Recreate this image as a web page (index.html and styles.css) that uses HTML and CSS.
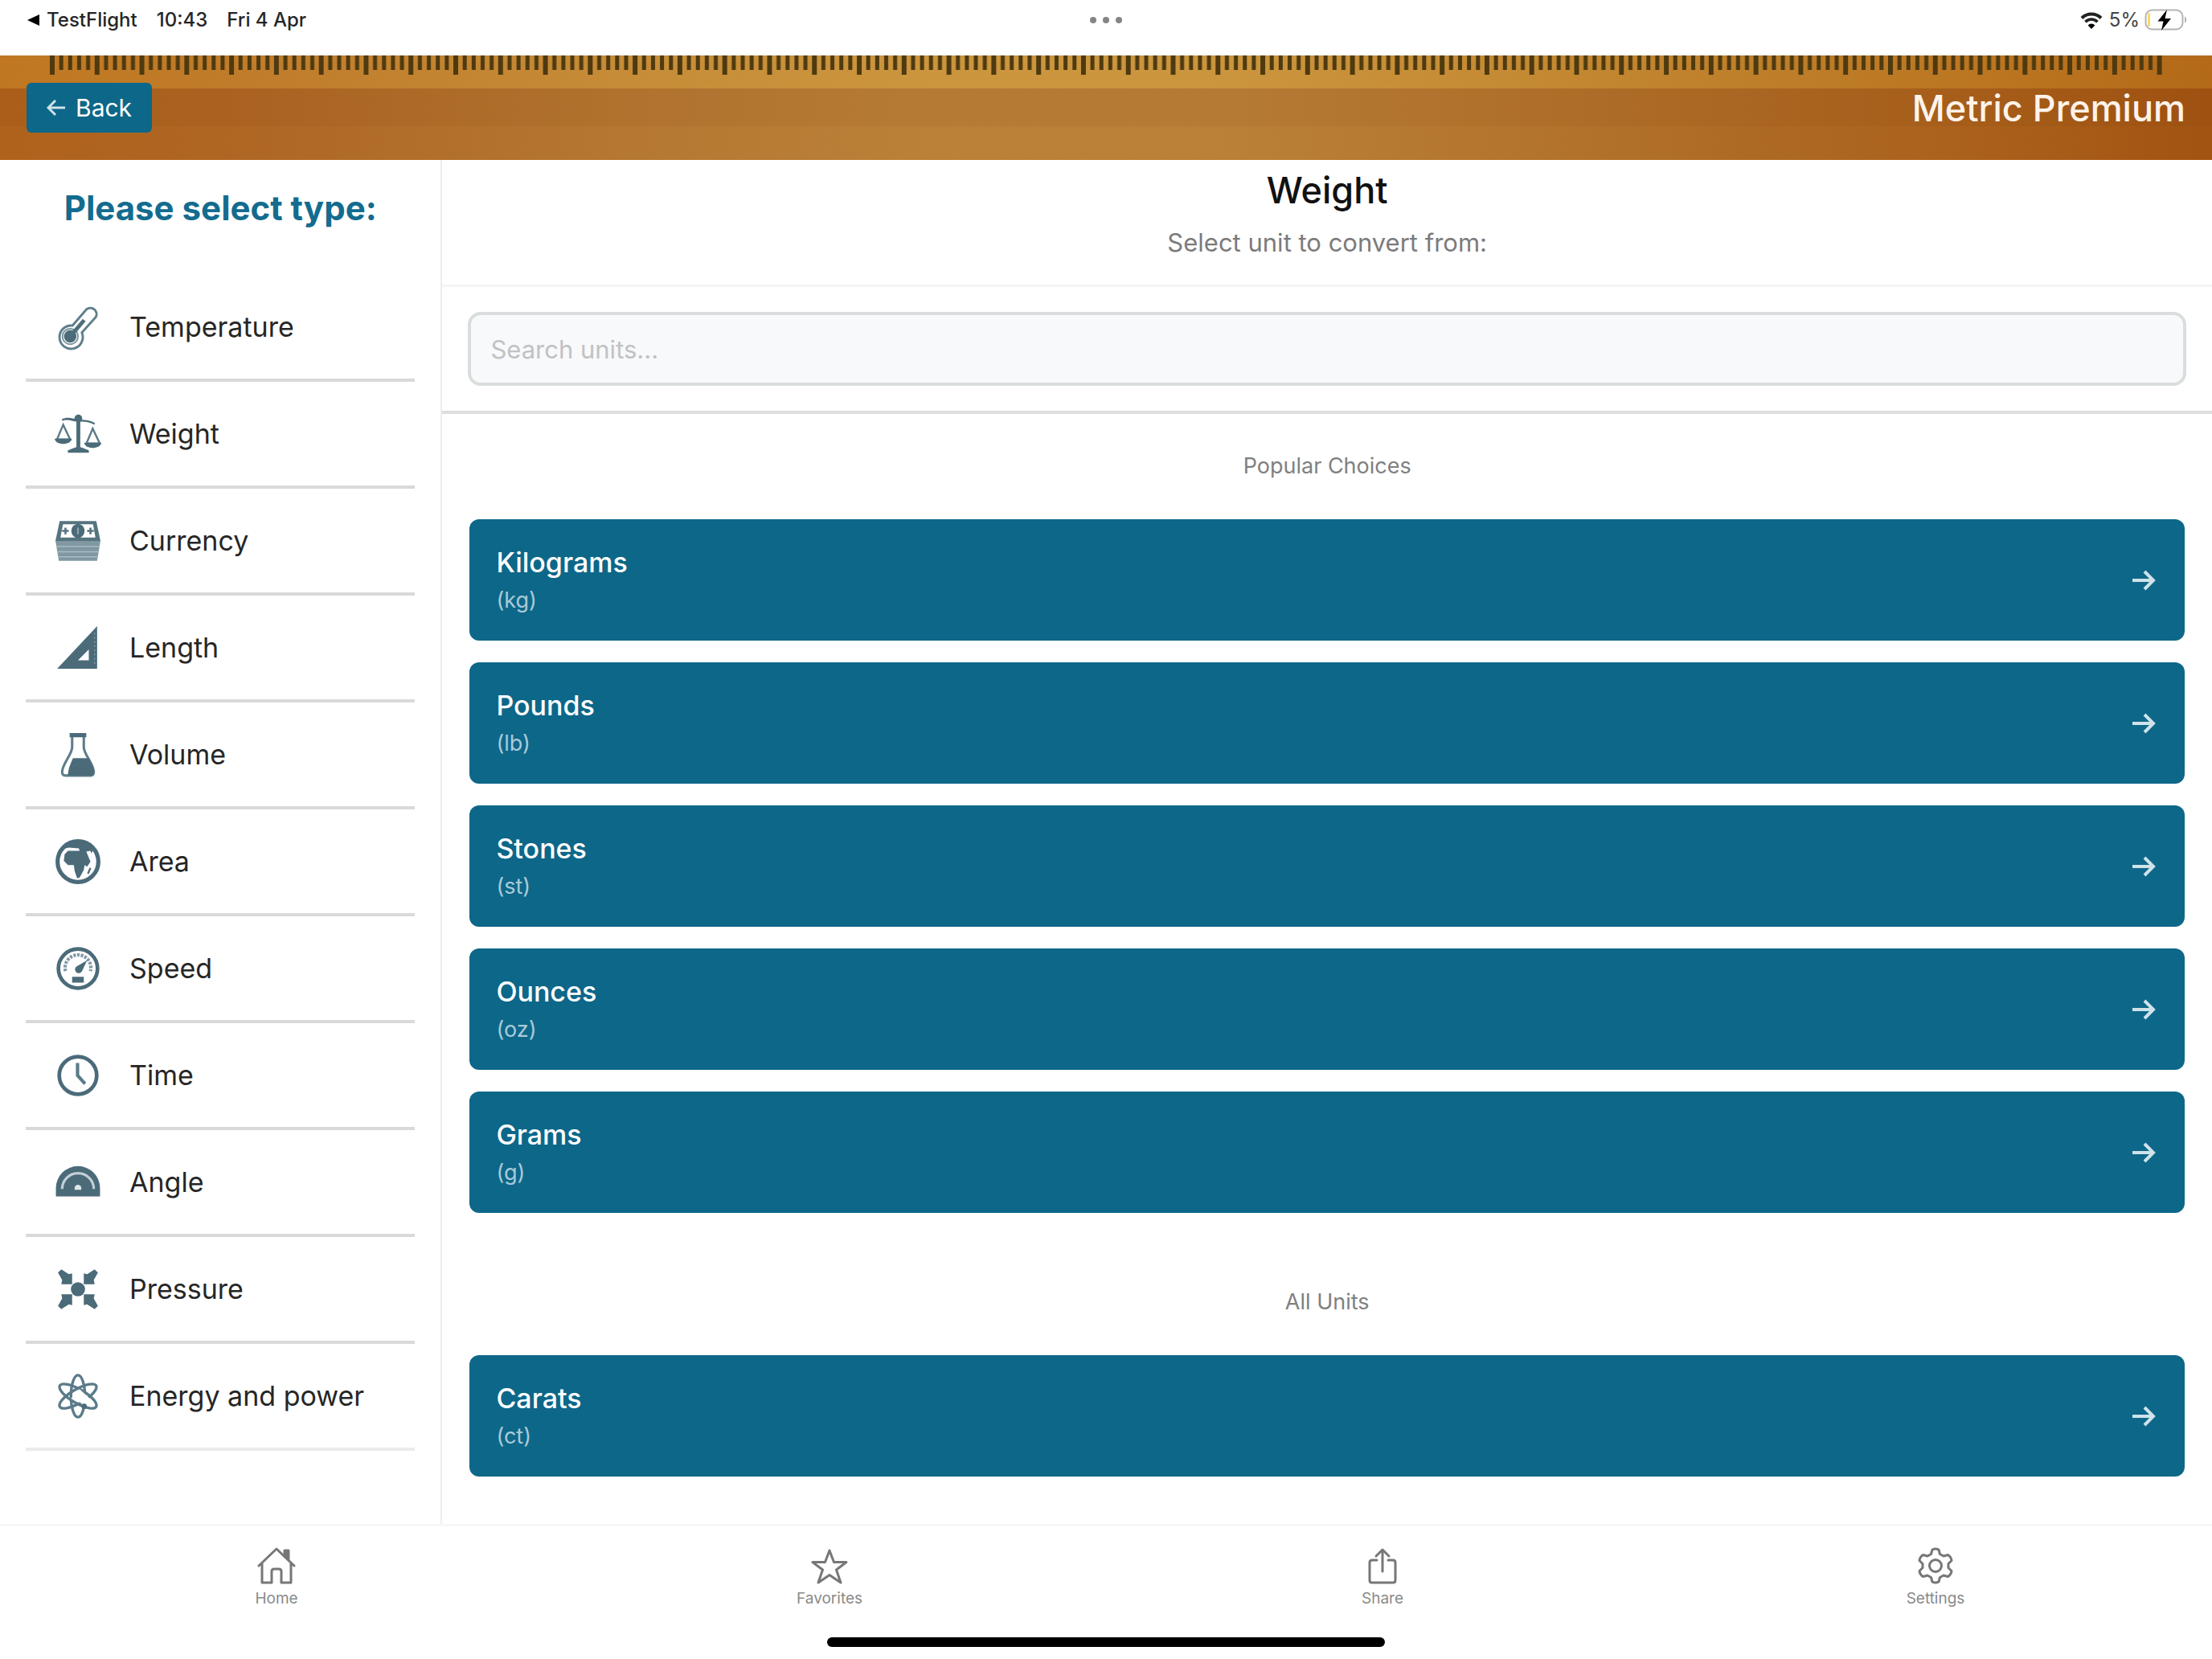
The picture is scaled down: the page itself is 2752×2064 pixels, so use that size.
FILE: index.html
```html
<!DOCTYPE html>
<html lang="en">
<head>
<meta charset="utf-8">
<title>Metric Premium</title>
<link rel="stylesheet" href="styles.css">
</head>
<body>
<div class="app">
  <div class="status">
    <div class="status-side status-left">
      <svg class="status-caret" viewBox="0 0 16 16" aria-hidden="true"><path d="M0 8 15 1v14z"/></svg>
      <span class="status-app">TestFlight</span>
      <span class="status-item">10:43</span>
      <span class="status-item">Fri 4 Apr</span>
    </div>
    <div class="status-dots"><i></i><i></i><i></i></div>
    <div class="status-side status-right">
      <svg class="wifi" viewBox="0 0 28 22" aria-hidden="true"><path d="M2 8.500a17 17 0 0 1 24 0" fill="none" stroke="#222" stroke-width="4"/><path d="M6.500 13.200a10.500 10.500 0 0 1 15 0" fill="none" stroke="#222" stroke-width="3.600"/><path d="M14 22l-4.400-4.600a6.200 6.200 0 0 1 8.800 0z"/></svg>
      <span class="battery-text">5%</span>
      <svg class="battery" viewBox="0 0 54 28" aria-hidden="true"><rect x="1.500" y="1.500" width="46" height="24" rx="8" fill="#fff" stroke="#b4b4b4" stroke-width="2"/><path d="M5.500 5.500v16" stroke="#f7d96a" stroke-width="3"/><path d="M50 9.500c3 .6 3 7.400 0 8z" fill="#b4b4b4"/><path d="M28 1 16.500 15.500h7L21 27l12-15h-7.500z" fill="#000"/></svg>
    </div>
  </div>

  <header class="header">
    <svg class="ruler" viewBox="0 0 2752 24" preserveAspectRatio="none" aria-hidden="true">
      <defs><pattern id="ticks" x="62" y="0" width="55.780" height="24" patternUnits="userSpaceOnUse"><path d="M0 0h6v24h-6zM11.656 0h5v18h-5zM22.812 0h5v18h-5zM33.968 0h5v18h-5zM45.124 0h5v18h-5z" fill="#4f3a10"/></pattern></defs>
      <rect x="62" width="2628" height="24" fill="url(#ticks)"/>
    </svg>
    <button class="back" type="button"><svg viewBox="0 0 24 24" aria-hidden="true"><path d="M23 12H3M11 3l-9 9 9 9"/></svg>Back</button>
    <h1 class="brand">Metric Premium</h1>
  </header>

  <div class="body">
    <nav class="sidebar" aria-label="Types">
      <h2 class="sidebar-title">Please select type:</h2>
      <a class="type" href="#"><svg viewBox="0 0 56 60"><path d="M21 28 39 7a8 8 0 0 1 12 10L33 37a15 15 0 1 1-12-9z" fill="none" stroke="#5f7e8b" stroke-width="3"/><circle cx="18" cy="42" r="10" fill="none" stroke="#7f98a2" stroke-width="2"/><circle cx="18" cy="42" r="8"/><path d="M18 42 36 21" stroke="#4d6d7b" stroke-width="5"/></svg>Temperature</a>
      <a class="type" href="#"><svg viewBox="0 0 60 52"><path d="M28 4h5v40h-5zM17 50v-3l10-4h7l10 4v3zM9 7c8-4 13-1 21 0s15 0 22 5l-1 2c-7-4-13-4-21-4S17 6 10 9z"/><circle cx="30.500" cy="6" r="5"/><path d="M11 14 3 33h17zM49 19l-8 19h17z" fill="none" stroke="#5b7b89" stroke-width="2.500"/><path d="M0 32h22c-1 9-21 9-22 0zM38 37h22c-1 9-21 9-22 0z"/></svg>Weight</a>
      <a class="type" href="#"><svg viewBox="0 0 56 52"><path d="M6 2h44l5 24H1z" fill="#55747f"/><path d="M10 6h36l3 16H7z" fill="#fff"/><ellipse cx="28" cy="14" rx="8" ry="8.500"/><path d="M28 10v8" stroke="#8fa5ad" stroke-width="2"/><path d="M13 10v8M9 14h8M43 10v8M39 14h8" stroke="#55747f" stroke-width="2.500"/><path d="M1 26h54l-4 24H5z" fill="#7f98a2"/><path d="M2 32.500h52M3 39h50M4 45h48" stroke="#a9bbc2" stroke-width="1.500"/></svg>Currency</a>
      <a class="type" href="#"><svg viewBox="0 0 56 56"><path fill-rule="evenodd" d="M51 2v51H3zM41 30 28 43h13z"/><path d="M48 10v40" stroke="#7f98a2" stroke-width="1.500" stroke-dasharray="2 3"/></svg>Length</a>
      <a class="type" href="#"><svg viewBox="0 0 56 56"><path d="M20 4h16M21 5v14c0 8-11 19-12 29-.3 3 1 5 4 5h30c3 0 4.300-2 4-5-1-10-12-21-12-29V5" fill="none" stroke="#5f7e8b" stroke-width="3"/><path d="M18 7V2h20v5zM22 32h19c3 6 5 10 6 15 .5 4-1 6-4 6H16c0-8 3-14 6-21z"/></svg>Volume</a>
      <a class="type" href="#"><svg viewBox="0 0 56 56"><circle cx="28" cy="28" r="24.500" fill="none" stroke="#4b6b79" stroke-width="5"/><path d="M9 13C17 1 39 1 47 13l-3 5-1-3-5 1 5 12-4 6-3-2-1 6-5 9-3 1-3-9-1-7h-7l-5-5 1-8 4-4h14l-1-3-12-1z"/><path d="M42 35l2 1-3 7-2-1z"/></svg>Area</a>
      <a class="type" href="#"><svg viewBox="0 0 56 56"><circle cx="28" cy="28" r="23.500" fill="none" stroke="#4b6b79" stroke-width="4.500"/><path d="M13 31a15.500 15.500 0 1 1 30 0" fill="none" stroke="#7f98a2" stroke-width="4" stroke-dasharray="3 1.500"/><path d="M39 18 33 31a4.500 4.500 0 1 1-6-6zM21 38h14v7H21z"/></svg>Speed</a>
      <a class="type" href="#"><svg viewBox="0 0 56 56"><circle cx="28" cy="28" r="22.500" fill="none" stroke="#4b6b79" stroke-width="4.500"/><path d="M27.500 13v15l9 10" fill="none" stroke="#5b7b89" stroke-width="4"/></svg>Time</a>
      <a class="type" href="#"><svg viewBox="0 0 56 56"><path d="M1.500 45V35a26.500 26.500 0 0 1 53 0v10z"/><path d="M9 36a19 19 0 0 1 38 0" fill="none" stroke="#c3d0d5" stroke-width="3"/><path d="M24 37v-2a4 4 0 0 1 8 0v2z" fill="#dfe7ea"/></svg>Angle</a>
      <a class="type" href="#"><svg viewBox="0 0 56 56"><circle cx="28" cy="28" r="8.500"/><path d="M4 8l4-4 9 6 4-1v13H8l1-5zM52 8l-4-4-9 6-4-1v13h13l-1-5zM4 48l4 4 9-6 4 1V34H8l1 5zM52 48l-4 4-9-6-4 1V34h13l-1 5z"/></svg>Pressure</a>
      <a class="type" href="#"><svg viewBox="0 0 56 60"><g fill="none" stroke="#5b7b89" stroke-width="3.500"><ellipse cx="28" cy="30" rx="9" ry="27"/><ellipse cx="28" cy="30" rx="9" ry="27" transform="rotate(60 28 30)"/><ellipse cx="28" cy="30" rx="9" ry="27" transform="rotate(-60 28 30)"/></g><path d="M30 21 44 34l-3 7-6-1-16-7z" fill="#fff"/><circle cx="36" cy="43" r="3.500"/></svg>Energy and power</a>
    </nav>

    <main class="main">
      <div class="intro">
        <h2 class="intro-title">Weight</h2>
        <p class="intro-text">Select unit to convert from:</p>
      </div>
      <div class="search"><input class="search-input" type="text" placeholder="Search units..." aria-label="Search units"></div>
      <section class="group">
        <h3 class="group-title">Popular Choices</h3>
        <button class="unit" type="button"><span class="unit-text"><span class="unit-name">Kilograms</span><span class="unit-sym">(kg)</span></span><svg viewBox="0 0 30 26"><path d="M1 13h25M16 2l11 11-11 11"/></svg></button>
        <button class="unit" type="button"><span class="unit-text"><span class="unit-name">Pounds</span><span class="unit-sym">(lb)</span></span><svg viewBox="0 0 30 26"><path d="M1 13h25M16 2l11 11-11 11"/></svg></button>
        <button class="unit" type="button"><span class="unit-text"><span class="unit-name">Stones</span><span class="unit-sym">(st)</span></span><svg viewBox="0 0 30 26"><path d="M1 13h25M16 2l11 11-11 11"/></svg></button>
        <button class="unit" type="button"><span class="unit-text"><span class="unit-name">Ounces</span><span class="unit-sym">(oz)</span></span><svg viewBox="0 0 30 26"><path d="M1 13h25M16 2l11 11-11 11"/></svg></button>
        <button class="unit" type="button"><span class="unit-text"><span class="unit-name">Grams</span><span class="unit-sym">(g)</span></span><svg viewBox="0 0 30 26"><path d="M1 13h25M16 2l11 11-11 11"/></svg></button>
      </section>
      <section class="group">
        <h3 class="group-title">All Units</h3>
        <button class="unit" type="button"><span class="unit-text"><span class="unit-name">Carats</span><span class="unit-sym">(ct)</span></span><svg viewBox="0 0 30 26"><path d="M1 13h25M16 2l11 11-11 11"/></svg></button>
      </section>
    </main>
  </div>

  <footer class="footer">
    <nav class="tabs" aria-label="Tabs">
      <a class="tab" href="#"><svg viewBox="0 0 48 48"><path d="M2 24 24 3l22 21M6 21v24h12V31q0-3 3-3h6q3 0 3 3v14h12V21"/><path d="M34 12V5h5v12z" fill="#777"/></svg>Home</a>
      <a class="tab" href="#"><svg viewBox="0 0 48 48"><path d="M24 5l5.500 14.500H45L32.500 29 38 45 24 35.500 10 45l5.500-16L3 19.500h15.500z"/></svg>Favorites</a>
      <a class="tab" href="#"><svg viewBox="0 0 48 48"><path d="M17 17h-6q-3 0-3 3v22q0 3 3 3h26q3 0 3-3V20q0-3-3-3h-6M24 31V4M16 12l8-8 8 8"/></svg>Share</a>
      <a class="tab" href="#"><svg viewBox="0 0 48 48"><path d="M20 4q4-2 8 0l1.500 5.500 4.500 2.500 5.500-1.500q4 2.500 4.500 7l-4 4v5l4 4q-.5 4.500-4.500 7L34 36l-4.500 2.500L28 44q-4 2-8 0l-1.500-5.500L14 36l-5.500 1.500q-4-2.500-4.500-7l4-4v-5l-4-4q.5-4.500 4.500-7L14 12l4.500-2.500z"/><circle cx="24" cy="24" r="7.500"/></svg>Settings</a>
    </nav>
    <div class="indicator"></div>
  </footer>
</div>
</body>
</html>
```

FILE: styles.css
```css
* { box-sizing: border-box; }

body {
  margin: 0;
  background: #fff;
  color: #262626;
  font-family: Inter, "Liberation Sans", sans-serif;
}

h1, h2, h3, p { margin: 0; font-weight: 500; }
a { color: inherit; text-decoration: none; }
button { border: 0; font: inherit; color: #fff; background: #0d6789; cursor: pointer; }

.app { display: flex; flex-direction: column; min-height: 100vh; }

/* Status bar */
.status {
  display: grid;
  grid-template-columns: 1fr auto 1fr;
  align-items: center;
  height: 69px;
  padding: 0 30px 20px;
  font-size: 24px;
  font-weight: 500;
}
.status-side { display: flex; align-items: center; }
.status-left { padding-left: 4px; }
.status-right { justify-content: flex-end; }
.status-caret { width: 16px; height: 16px; margin-right: 8px; }
.status-item { margin-left: 24px; }
.status-dots { display: flex; gap: 8px; }
.status-dots i { width: 8px; height: 8px; border-radius: 50%; background: #858585; }
.wifi { width: 28px; height: 22px; margin-right: 8px; }
.battery-text { margin-right: 6px; color: #444; font-weight: 400; }
.battery { width: 54px; height: 28px; }

/* Wooden header */
.header {
  position: relative;
  display: flex;
  align-items: center;
  justify-content: space-between;
  height: 130px;
  padding: 0 33px;
  background:
    linear-gradient(rgba(240, 200, 50, .14) 41px, rgba(110, 40, 0, .18) 41px, rgba(110, 40, 0, .18) 88px, rgba(110, 40, 0, .12) 88px),
    linear-gradient(90deg, #b86a1e 0%, #b8702a 12%, #bf8238 28%, #c58d40 42%, #c58d40 55%, #be8034 68%, #b67228 80%, #b2681e 90%, #a95a14 100%);
}
.ruler { position: absolute; top: 0; left: 0; width: 100%; height: 24px; }
.back {
  display: flex;
  align-items: center;
  gap: 12px;
  height: 62px;
  padding: 0 25px;
  border-radius: 6px;
  font-size: 30px;
}
.back svg { width: 24px; height: 24px; fill: none; stroke: #cfe2ea; stroke-width: 3; }
.brand { color: #fdf3ea; font-size: 45px; }

/* Body columns */
.body { display: flex; flex: 1; }
.sidebar {
  flex: none;
  width: 20%;
  padding: 0 32px;
  border-right: 2px solid #ededed;
}
.sidebar-title {
  height: 143px;
  padding-top: 36px;
  color: #136c8f;
  font-size: 42px;
  line-height: 48px;
  font-weight: 700;
  text-align: center;
}
.type {
  display: flex;
  align-items: center;
  gap: 35px;
  height: 133px;
  padding-left: 36px;
  border-bottom: 4px solid #d9d9d9;
  font-size: 34px;
}
.type:last-child { border-color: #ebebeb; }
.type svg { width: 58px; height: 58px; fill: #4b6b79; }

.main { flex: 1; min-width: 0; }
.intro { height: 158px; padding-top: 8px; border-bottom: 3px solid #f4f4f4; text-align: center; }
.intro-title { color: #111; font-size: 45px; line-height: 60px; }
.intro-text { margin-top: 13px; color: #7b7b7b; font-size: 31px; line-height: 44px; font-weight: 400; }
.search { padding: 31px 32px; border-bottom: 4px solid #dedede; }
.search-input {
  display: block;
  width: 100%;
  height: 92px;
  padding: 0 24px;
  border: 4px solid #dadddd;
  border-radius: 16px;
  background: #f8f9fb;
  font: inherit;
  font-size: 31px;
}
.search-input::placeholder { color: #c0c2c4; opacity: 1; }
.group { display: flex; flex-direction: column; gap: 27px; padding: 43px 34px 46px; }
.group-title { margin-bottom: 17px; color: #808080; font-size: 27px; line-height: 44px; font-weight: 400; text-align: center; }
.unit {
  display: flex;
  align-items: center;
  justify-content: space-between;
  height: 151px;
  padding: 0 36px 0 33px;
  border-radius: 12px;
  text-align: left;
}
.unit-text { display: flex; flex-direction: column; }
.unit-name { font-size: 34px; line-height: 50px; font-weight: 500; }
.unit-sym { color: #a9cad8; font-size: 27px; line-height: 44px; }
.unit svg { width: 30px; height: 26px; fill: none; stroke: #cfe2ea; stroke-width: 4; }

/* Bottom bar */
.footer { height: 168px; border-top: 3px solid #f7f7f7; }
.tabs { display: grid; grid-template-columns: repeat(4, 1fr); }
.tab {
  display: flex;
  flex-direction: column;
  align-items: center;
  gap: 3px;
  padding-top: 25px;
  color: #8a8a8a;
  font-size: 19px;
  line-height: 28px;
}
.tab svg { width: 48px; height: 48px; fill: none; stroke: #777; stroke-width: 3; stroke-linejoin: round; stroke-linecap: round; }
.indicator { width: 694px; height: 12px; margin: 34px auto 0; border-radius: 6px; background: #000; }
```
